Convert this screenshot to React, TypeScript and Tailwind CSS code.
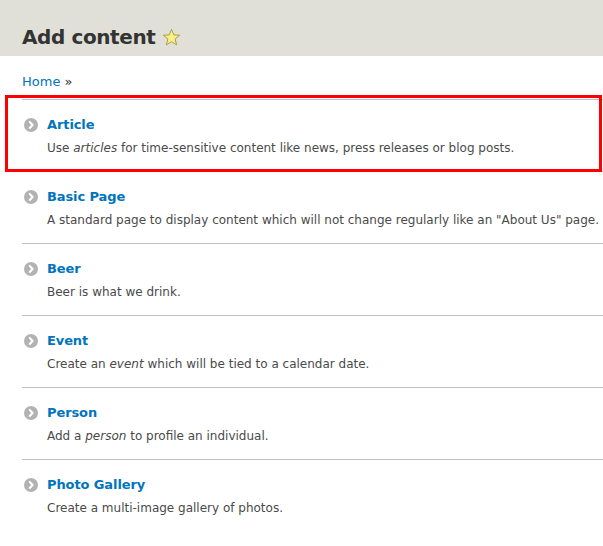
const items = [
  {
    title: "Article",
    desc: (
      <>
        Use <em>articles</em> for time-sensitive content like news, press releases or blog posts.
      </>
    ),
  },
  {
    title: "Basic Page",
    desc: <>A standard page to display content which will not change regularly like an "About Us" page.</>,
  },
  { title: "Beer", desc: <>Beer is what we drink.</> },
  {
    title: "Event",
    desc: (
      <>
        Create an <em>event</em> which will be tied to a calendar date.
      </>
    ),
  },
  {
    title: "Person",
    desc: (
      <>
        Add a <em>person</em> to profile an individual.
      </>
    ),
  },
  { title: "Photo Gallery", desc: <>Create a multi-image gallery of photos.</> },
];

function Star() {
  return (
    <svg width="19" height="19" viewBox="0 0 20 20" className="ml-[7px] mt-[1px]">
      <path
        d="M10 1.5 L12.5 7.3 L18.6 7.6 L13.8 11.6 L15.4 17.8 L10 14.4 L4.6 17.8 L6.2 11.6 L1.4 7.6 L7.5 7.3 Z"
        fill="#f7f08a"
        stroke="#a59a3a"
        strokeWidth="1"
        strokeLinejoin="round"
      />
    </svg>
  );
}

function Bullet() {
  return (
    <svg width="14" height="14" viewBox="0 0 14 14" className="shrink-0">
      <circle cx="7" cy="7" r="7" fill="#b3b3b3" />
      <path d="M5.8 4 L8.6 7 L5.8 10" fill="none" stroke="#fff" strokeWidth="2" strokeLinecap="round" strokeLinejoin="round" />
    </svg>
  );
}

export default function App() {
  return (
    <div className="min-h-screen bg-white" style={{ fontFamily: '"DejaVu Sans", Verdana, sans-serif' }}>
      <div className="h-[56px] bg-[#e0e0d8] px-[22px] pt-[23px]">
        <h1 className="flex items-center text-[20px] leading-[28px] font-bold tracking-[-0.4px] text-[#333]">
          Add content
          <Star />
        </h1>
      </div>
      <div className="px-[22px] pt-[17px]">
        <div className="text-[13px] leading-[18px] text-[#333]">
          <a href="#" className="text-[#0074bd]">Home</a> »
        </div>
        <ul className="mt-[8px] -mr-[22px]">
          {items.map((item, i) => (
            <li
              key={item.title}
              className={`relative pt-[15px] pb-[14px] ${i === 0 ? "border-t border-[#c0c0c0]" : ""} ${
                i < items.length - 1 ? "border-b border-[#c0c0c0]" : ""
              }`}
            >
              {i === 0 && (
                <div className="absolute left-[-17px] top-[-5px] right-[1px] bottom-[-1px] border-[3px] border-[#ff0000] pointer-events-none" />
              )}
              <div className="flex items-center gap-[9px] pl-[2px]">
                <Bullet />
                <a href="#" className="text-[13px] leading-[20px] font-bold tracking-[-0.1px] text-[#0074bd]">
                  {item.title}
                </a>
              </div>
              <p className="mt-[4px] pl-[25px] text-[12px] leading-[18px] text-[#4a4a4a]">{item.desc}</p>
            </li>
          ))}
        </ul>
      </div>
    </div>
  );
}
